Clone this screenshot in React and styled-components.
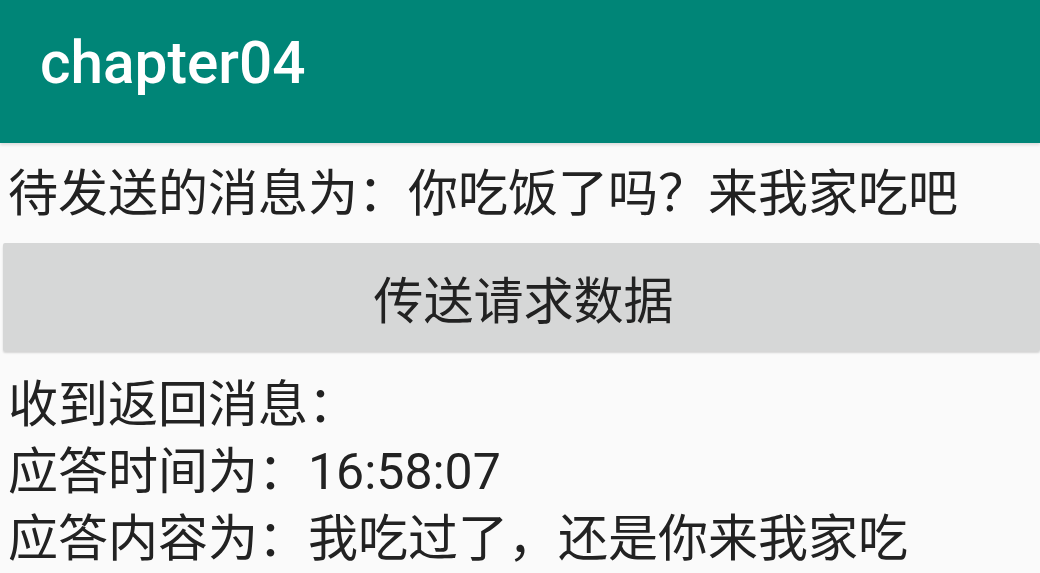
import React from 'react';
import styled, { createGlobalStyle } from 'styled-components';

const GlobalStyle = createGlobalStyle`
  html, body {
    margin: 0;
    padding: 0;
    background: #fafafa;
  }
  body {
    font-family: Roboto, "Noto Sans CJK SC", sans-serif;
    overflow: hidden;
  }
`;

const Screen = styled.div`
  width: 1040px;
  height: 573px;
  background: #fafafa;
  display: flex;
  flex-direction: column;
  overflow: hidden;
`;

const Toolbar = styled.header`
  height: 143px;
  flex-shrink: 0;
  background: #008577;
  display: flex;
  align-items: center;
  padding: 0 0 18px 40px;
  box-sizing: border-box;
  box-shadow: 0 2px 3px rgba(0, 0, 0, 0.12);
`;

const Title = styled.h1`
  margin: 0;
  color: #ffffff;
  font-family: Roboto, sans-serif;
  font-size: 58.5px;
  font-weight: 500;
  letter-spacing: 0;
`;

const Content = styled.main`
  display: flex;
  flex-direction: column;
  padding: 18px 0 0 8px;
`;

const Line = styled.div`
  color: #222222;
  font-family: Roboto, "Noto Sans CJK SC", sans-serif;
  font-size: 50px;
  line-height: 67px;
  white-space: nowrap;
`;

const SendButton = styled.button`
  margin: 15px 0 21px -5px;
  height: 108px;
  border: none;
  border-radius: 2px;
  background: #d6d7d7;
  box-shadow: 0 2px 2px rgba(0, 0, 0, 0.15);
  color: #222222;
  font-family: Roboto, "Noto Sans CJK SC", sans-serif;
  font-size: 50px;
  padding: 0 0 0 4px;
  cursor: pointer;
`;

const replies = [
  '收到返回消息：',
  '应答时间为：16:58:07',
  '应答内容为：我吃过了，还是你来我家吃',
];

export default function App() {
  return (
    <Screen>
      <GlobalStyle />
      <Toolbar>
        <Title>chapter04</Title>
      </Toolbar>
      <Content>
        <Line>待发送的消息为：你吃饭了吗？来我家吃吧</Line>
        <SendButton>传送请求数据</SendButton>
        {replies.map((text) => (
          <Line key={text}>{text}</Line>
        ))}
      </Content>
    </Screen>
  );
}
